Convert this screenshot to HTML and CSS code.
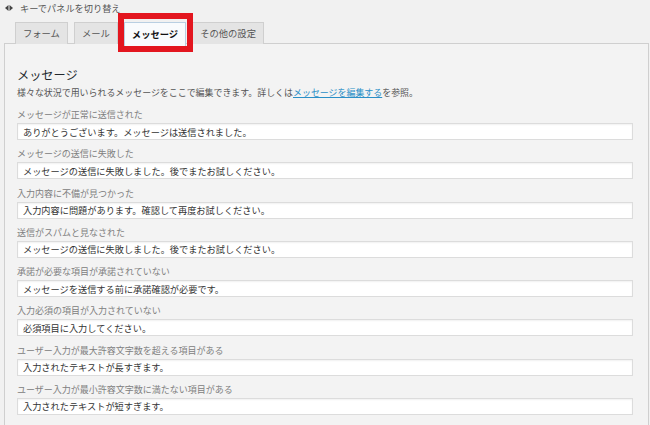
FILE: index.html
```html
<!DOCTYPE html>
<html lang="ja">
<head>
<meta charset="utf-8">
<link rel="stylesheet" href="styles.css">
</head>
<body>
<div class="topbar">
  <svg class="arrows" width="8" height="6" viewBox="0 0 8 6"><polygon points="0,3 3.5,0 3.5,6" fill="#444"/><polygon points="8,3 4.5,0 4.5,6" fill="#444"/></svg>
  <span>キーでパネルを切り替え</span>
</div>
<div class="tabs">
  <div class="tab">フォーム</div>
  <div class="tab">メール</div>
  <div class="tab active">メッセージ</div>
  <div class="tab">その他の設定</div>
  <div class="highlight"></div>
</div>
<div class="panel">
  <h2 class="title">メッセージ</h2>
  <p class="desc">様々な状況で用いられるメッセージをここで編集できます。詳しくは<a href="#">メッセージを編集する</a>を参照。</p>
  <div class="field"><label class="lbl">メッセージが正常に送信された</label><input class="inp" type="text" value="ありがとうございます。メッセージは送信されました。"></div>
  <div class="field"><label class="lbl">メッセージの送信に失敗した</label><input class="inp" type="text" value="メッセージの送信に失敗しました。後でまたお試しください。"></div>
  <div class="field"><label class="lbl">入力内容に不備が見つかった</label><input class="inp" type="text" value="入力内容に問題があります。確認して再度お試しください。"></div>
  <div class="field"><label class="lbl">送信がスパムと見なされた</label><input class="inp" type="text" value="メッセージの送信に失敗しました。後でまたお試しください。"></div>
  <div class="field"><label class="lbl">承諾が必要な項目が承諾されていない</label><input class="inp" type="text" value="メッセージを送信する前に承諾確認が必要です。"></div>
  <div class="field"><label class="lbl">入力必須の項目が入力されていない</label><input class="inp" type="text" value="必須項目に入力してください。"></div>
  <div class="field"><label class="lbl">ユーザー入力が最大許容文字数を超える項目がある</label><input class="inp" type="text" value="入力されたテキストが長すぎます。"></div>
  <div class="field"><label class="lbl">ユーザー入力が最小許容文字数に満たない項目がある</label><input class="inp" type="text" value="入力されたテキストが短すぎます。"></div>
</div>
</body>
</html>
```
FILE: styles.css
```css
html, body {
  margin: 0;
  padding: 0;
  background: #f1f1f1;
  font-family: "Noto Sans CJK JP", "Noto Sans", sans-serif;
  overflow: hidden;
}
.topbar {
  height: 16px;
  padding-left: 5px;
  display: flex;
  align-items: center;
  font-size: 9.2px;
  color: #555;
}
.arrows {
  margin-right: 7px;
}
.tabs {
  position: relative;
  margin-top: 6px;
  height: 21px;
  padding-left: 15px;
  display: flex;
  align-items: flex-start;
  gap: 6px;
}
.tab {
  box-sizing: border-box;
  height: 22px;
  padding: 0 7px;
  border: 1px solid #cfcfcf;
  border-bottom: none;
  background: #e4e4e4;
  color: #555;
  font-size: 9.3px;
  line-height: 20px;
  white-space: nowrap;
}
.tab.active {
  position: relative;
  z-index: 2;
  height: 25px;
  background: #f9fbfd;
  border: 1px solid #b9cfe2;
  color: #111;
  font-weight: bold;
  line-height: 23px;
}
.highlight {
  position: absolute;
  z-index: 3;
  left: 118px;
  top: -9px;
  width: 75px;
  height: 39px;
  box-sizing: border-box;
  border: 6px solid #e3161f;
}
.panel {
  margin: 0 1px 0 4px;
  border: 1px solid #cfcfcf;
  background: #f3f3f3;
  padding: 23px 15px 10px 12px;
  height: 500px;
}
.title {
  margin: 0 0 3px;
  font-size: 12.2px;
  font-weight: normal;
  line-height: 16px;
  color: #23282d;
}
.desc {
  margin: 0 0 7px;
  font-size: 8.95px;
  line-height: 14px;
  color: #555;
  white-space: nowrap;
}
.desc a {
  color: #2a8fc7;
  text-decoration: underline;
}
.field {
  margin-bottom: 6.25px;
}
.lbl {
  display: block;
  font-size: 9px;
  line-height: 16px;
  color: #808080;
}
.inp {
  display: block;
  box-sizing: border-box;
  width: 100%;
  height: 17px;
  margin: 0;
  padding: 0 5px;
  border: 1px solid #dcdcdc;
  background: #fff;
  box-shadow: inset 0 1px 2px rgba(0,0,0,0.06);
  font-family: "Noto Sans CJK JP", "Noto Sans", sans-serif;
  font-size: 9.2px;
  color: #333;
  outline: none;
}
```
